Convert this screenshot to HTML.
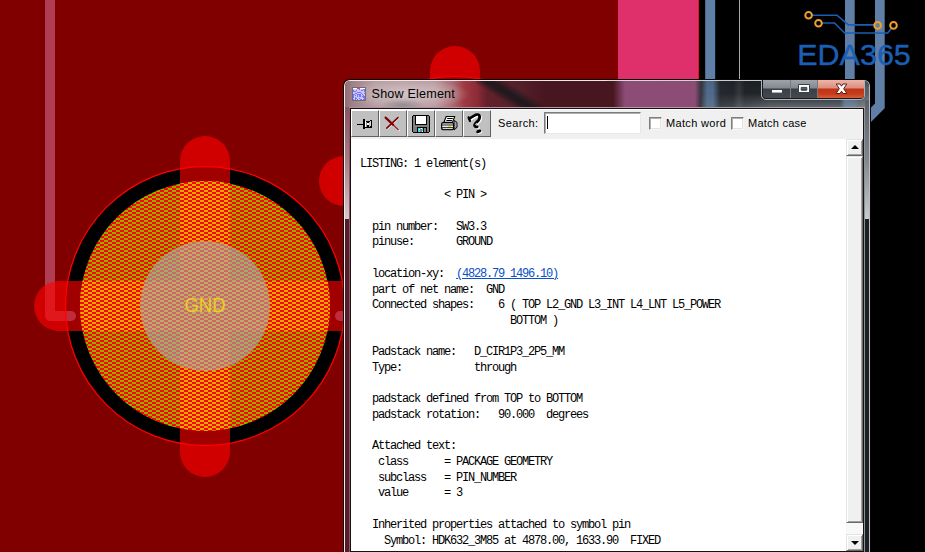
<!DOCTYPE html>
<html lang="en">
<head>
<meta charset="utf-8">
<title>Show Element</title>
<style>
html,body{margin:0;padding:0;}
html,body{width:925px;height:552px;overflow:hidden;}
body{background:#800000;font-family:"Liberation Sans",sans-serif;}
#root{position:relative;width:925px;height:552px;overflow:hidden;background:#800000;}
#pcb{position:absolute;left:0;top:0;width:925px;height:552px;display:block;}

.abs{position:absolute;}
/* outer window frame (Aero glass) */
#win{position:absolute;left:343px;top:79px;width:528px;height:480px;border-radius:7px 7px 0 0;background:#0c0508;overflow:hidden;}
#winhi{position:absolute;left:1px;top:1px;width:526px;height:480px;border-radius:6px 6px 0 0;background:linear-gradient(90deg,#f0e8ea 0,#f0e8ea 263px,#d8dce0 263px,#b8bcc0 100%);overflow:hidden;}
#glass{position:absolute;left:1px;top:1px;width:524px;height:480px;border-radius:5px 5px 0 0;overflow:hidden;
  background:linear-gradient(90deg,#541e28 0,#541e28 262px,#1c2026 262px,#1c2026 524px);}
#tglass{position:absolute;left:0;top:0;width:524px;height:26px;overflow:hidden;
  background:linear-gradient(90deg,#916c73 0,#a08388 8px,#b69ea2 30px,#b89a9f 90px,#ac6a72 108px,#a03a44 119px,#8c2c36 132px,#64202a 142px,#54202a 175px,#48161f 200px,#48161f 268px,#8c4c76 280px,#8c4c76 350px,#34343c 356px,#4f6a8a 362px,#4f6a8a 368px,#262a30 375px,#22262a 388px,#34383e 394px,#202428 400px,#22262c 495px,#4a6484 500px,#4a6484 509px,#4a5058 514px,#5e646c 524px);}
#glow{position:absolute;left:8px;top:-4px;width:120px;height:30px;
  background:radial-gradient(ellipse 62px 15px at 55px 17px,rgba(214,200,203,.9) 0,rgba(210,194,198,.55) 50%,rgba(205,185,190,0) 100%);}
#gstreak{position:absolute;left:36px;top:17px;width:44px;height:9px;background:radial-gradient(ellipse 22px 6px at 22px 7px,rgba(128,132,138,.75) 0,rgba(128,132,138,0) 100%);}
#streak{position:absolute;left:155px;top:-22px;width:19px;height:70px;transform:rotate(-58deg);background:linear-gradient(90deg,rgba(30,24,30,0) 0,rgba(30,24,30,.92) 38%,rgba(30,24,30,.92) 58%,rgba(30,24,30,0) 100%);}
#rg{position:absolute;left:356px;top:0;width:168px;height:26px;-webkit-mask-image:linear-gradient(90deg,rgba(0,0,0,.25) 0,rgba(0,0,0,.4) 20px,#000 70px);mask-image:linear-gradient(90deg,rgba(0,0,0,.25) 0,rgba(0,0,0,.4) 20px,#000 70px);background:linear-gradient(180deg,rgba(0,0,0,.2) 0,rgba(0,0,0,0) 8px,rgba(160,166,172,0) 12px,rgba(160,166,172,.5) 26px);}
#title{position:absolute;left:371.6px;top:86.6px;font:12.6px/14px "Liberation Sans",sans-serif;color:#000;white-space:nowrap;letter-spacing:.18px;}
#ticon{position:absolute;left:352px;top:87px;width:14px;height:14px;box-sizing:border-box;border:1px solid #6e6e72;background:#c4c4ff;overflow:hidden;}
/* client */
#clientborder{position:absolute;left:349px;top:107px;width:516px;height:460px;background:linear-gradient(90deg,#8a5a64 0,#8a5a64 50%,#909498 50%,#909498 100%);}
#cbtop{position:absolute;left:349px;top:107px;width:516px;height:1px;background:linear-gradient(90deg,#b0909a 0,#b898a6 345px,#9ca0a6 356px,#a4a8ae 100%);}
#clientdark{position:absolute;left:350px;top:108px;width:514px;height:460px;background:#1a1014;}
#client{position:absolute;left:351px;top:109px;width:512px;height:442px;background:#fff;overflow:hidden;}
#toolbar{position:absolute;left:0;top:0;width:512px;height:30px;background:linear-gradient(#fff 0,#fff 1px,#f0f0f0 1px,#f0f0f0 100%);}
.tb{position:absolute;top:1px;width:28px;height:27px;background:#c0c0c0;box-sizing:border-box;border-left:1px solid #fff;border-top:1px solid #fff;border-right:1px solid #606060;border-bottom:1px solid #606060;}
.ic{position:absolute;left:-1px;top:-1px;display:block;}
.lbl{position:absolute;font:11px/13px "Liberation Sans",sans-serif;color:#000;white-space:nowrap;}
.cb{position:absolute;top:8px;width:13px;height:13px;box-sizing:border-box;background:#fff;border:1px solid;border-color:#7e7e7e #f6f6f6 #f6f6f6 #7e7e7e;box-shadow:inset 1px 1px 0 #b0b0b0,inset -1px -1px 0 #e4e4e4;}
#search{position:absolute;left:193px;top:3px;width:97px;height:22px;box-sizing:border-box;background:#fff;border:1px solid;border-color:#7a7a7a #e8e8e8 #e8e8e8 #7a7a7a;box-shadow:inset 1px 1px 0 #b0b0b0;}
#caret{position:absolute;left:2px;top:3px;width:1px;height:13px;background:#000;}
#text{position:absolute;left:9px;top:48px;margin:0;font:12px/15.69px "Liberation Mono",monospace;letter-spacing:-1.2px;color:#000;white-space:pre;}
#text a{color:#0a50c8;text-decoration:underline;}
#sb{position:absolute;left:495px;top:30px;width:17px;height:412px;background:#f8f8f8;}

/* caption buttons */
#cap{position:absolute;left:761px;top:80px;width:104px;height:20px;box-sizing:border-box;border:1px solid rgba(225,230,235,.75);border-top:none;border-radius:0 0 5px 5px;overflow:hidden;background:#15181c;}
.cbtn{position:absolute;top:0;height:18px;}
.cbtn.g{background:linear-gradient(#a0a4aa 0,#84888f 8px,#3a3e46 9px,#444851 18px);}
#cmin{left:1px;width:27px;border-radius:0 0 0 3px;}
#cmax{left:29px;width:26px;}
.csep{position:absolute;top:0;width:1px;height:18px;background:rgba(200,205,212,.55);}
#cclose{left:56px;width:46px;border-radius:0 0 3px 0;background:linear-gradient(#ecb6a8 0,#dc8e7c 8px,#bf3318 9px,#c63c1c 14px,#d65c36 18px);}
.cbtn svg{position:absolute;left:0;top:0;display:block;}
/* scrollbar */
.sbtn{position:absolute;left:0;width:17px;height:17px;box-sizing:border-box;background:#f0f0f0;border:1px solid;border-color:#e3e3e3 #696969 #696969 #e3e3e3;box-shadow:inset 1px 1px 0 #fff,inset -1px -1px 0 #a0a0a0;}
#sthumb{position:absolute;left:0;top:17px;width:17px;height:367px;box-sizing:border-box;background:#f0f0f0;border:1px solid;border-color:#e3e3e3 #696969 #696969 #e3e3e3;box-shadow:inset 1px 1px 0 #fff,inset -1px -1px 0 #a0a0a0;}
.arr{position:absolute;left:4px;width:0;height:0;border-left:4px solid transparent;border-right:4px solid transparent;}
/* side frame upper gradient */
#lfx{position:absolute;left:345px;top:107px;width:4px;height:112px;background:linear-gradient(#8a5560 0,#a88088 50%,#d8c8cc 100%);}
#rfx{position:absolute;left:865px;top:100px;width:4px;height:119px;background:linear-gradient(#5a6068 0,#80868c 50%,#c8ccd0 100%);}

</style>
</head>
<body>
<div id="root">
<svg id="pcb" width="925" height="552" viewBox="0 0 925 552">
  <defs>
    <pattern id="chkG" x="0" y="0" width="8" height="4" patternUnits="userSpaceOnUse" shape-rendering="crispEdges">
      <rect x="0" y="0" width="8" height="4" fill="#ff0400"/>
      <rect x="0" y="0" width="4" height="2" fill="#94ae00"/>
      <rect x="4" y="2" width="4" height="2" fill="#94ae00"/>
    </pattern>
    <pattern id="chkY" x="0" y="0" width="8" height="4" patternUnits="userSpaceOnUse" shape-rendering="crispEdges">
      <rect x="0" y="0" width="8" height="4" fill="#ff0400"/>
      <rect x="0" y="0" width="4" height="2" fill="#dcaa00"/>
      <rect x="4" y="2" width="4" height="2" fill="#dcaa00"/>
    </pattern>
    <clipPath id="padClip"><circle cx="205" cy="306" r="125"/></clipPath>
    <clipPath id="ringClip"><circle cx="205" cy="306" r="139.5"/></clipPath>
  </defs>
  <!-- board background -->
  <rect x="0" y="0" width="925" height="552" fill="#800000"/>
  <!-- right side black area -->
  <rect x="699" y="0" width="226" height="552" fill="#000000"/>
  <rect x="618" y="0" width="80" height="90" fill="#df306c"/>
  <rect x="698" y="0" width="1" height="90" fill="#f01020"/>
  <!-- blue-grey traces -->
  <rect x="705.2" y="0" width="10" height="552" fill="#5f7fa6"/>
  <rect x="845" y="0" width="9.7" height="552" fill="#5f7fa6"/>
  <path d="M875 0 H884.7 V108.2 L870 122.9 V108.6 L875 103.6 Z" fill="#5f7fa6"/>
  <rect x="739" y="0" width="1" height="90" fill="#a8a8a8"/>

  <!-- other pads hidden behind dialog -->
  <path d="M430 71 A25 25 0 0 1 480 71 V120 H430 Z" fill="#d00000"/>
  <path d="M430 78.8 A138.5 138.5 0 0 1 480 78.8 V120 H430 Z" fill="#a00000"/><path d="M428 79.2 A138.5 138.5 0 0 1 482 79.2" fill="none" stroke="#ff0000" stroke-width="1"/>
  <circle cx="344" cy="181" r="25" fill="#d00000"/>

  <!-- pink trace (under spokes) -->
  <path d="M50 -10 V316 H71" fill="none" stroke="#af3e52" stroke-width="10" stroke-linecap="round" stroke-linejoin="round"/>
  <!-- black ring -->
  <circle cx="205" cy="306" r="139.5" fill="#000000"/>
  <!-- thermal spokes -->
  <g fill="#ff0000" fill-opacity="0.63">
    <path d="M180 161 A25 25 0 0 1 230 161 V452 A25 25 0 0 1 180 452 Z"/>
    <path d="M59 281 H180 V331 H59 A25 25 0 0 1 59 281 Z"/>
    <path d="M230 281 H351 A25 25 0 0 1 351 331 H230 Z"/>
  </g>
  <g clip-path="url(#ringClip)">
    <path d="M50 316 H71" fill="none" stroke="#c02c3c" stroke-width="10" stroke-linecap="round"/>
    <path d="M340 316 H400" fill="none" stroke="#c02c3c" stroke-width="10" stroke-linecap="round"/>
  </g>
  <circle cx="205" cy="306" r="139.5" fill="none" stroke="#ff0000" stroke-width="1.25"/>
  <!-- pad fill -->
  <g clip-path="url(#padClip)" shape-rendering="crispEdges">
    <rect x="70" y="170" width="270" height="272" fill="url(#chkG)"/>
    <rect x="180" y="170" width="50" height="272" fill="url(#chkY)"/>
    <rect x="70" y="281" width="270" height="50" fill="url(#chkY)"/>
  </g>
  <!-- drill -->
  <circle cx="205" cy="306" r="65" fill="#acaaae" fill-opacity="0.6"/>
  <text x="205" y="312.3" text-anchor="middle" font-family="Liberation Sans, sans-serif" font-size="19.5" fill="#e8d020" textLength="41" lengthAdjust="spacingAndGlyphs">GND</text>

  <!-- EDA365 logo -->
  <g fill="none" stroke="#1b5fb4" stroke-width="1.6">
    <path d="M812 15.2 H837 L848.4 24.9 H874"/>
    <path d="M822 23 H834.5 L844.6 33 H887.7 L891.5 28.3"/>
  </g>
  <g fill="none" stroke="#f0a028" stroke-width="2">
    <circle cx="808.6" cy="15.2" r="3.3"/>
    <circle cx="818.5" cy="23.3" r="3.3"/>
    <circle cx="877.6" cy="25.4" r="3.3"/>
    <circle cx="893.5" cy="25.4" r="3.3"/>
  </g>
  <text x="797.3" y="64.7" font-family="Liberation Sans, sans-serif" font-size="29.5" fill="#1b5fb4" stroke="#1b5fb4" stroke-width="0.4" textLength="113.5" lengthAdjust="spacingAndGlyphs">EDA365</text>
</svg>

<div id="win"><div id="winhi"><div id="glass"><div id="tglass"><div id="glow"></div><div id="gstreak"></div><div id="streak"></div><div id="rg"></div></div></div></div></div>
<div id="ticon"><svg width="12" height="12" viewBox="0 0 12 12" style="display:block" shape-rendering="crispEdges"><rect width="12" height="12" fill="#c8c8ff"/><rect width="12" height="1" fill="#fff"/><g fill="#7474ff"><rect x="6" y="1" width="1" height="1"/><rect x="10" y="1" width="1" height="1"/><rect x="11" y="1" width="1" height="1"/><rect x="0" y="2" width="1" height="1"/><rect x="3" y="2" width="1" height="1"/><rect x="8" y="2" width="1" height="1"/><rect x="9" y="2" width="1" height="1"/><rect x="11" y="2" width="1" height="1"/><rect x="0" y="3" width="1" height="1"/><rect x="1" y="3" width="1" height="1"/><rect x="2" y="3" width="1" height="1"/><rect x="11" y="3" width="1" height="1"/><rect x="4" y="4" width="1" height="1"/><rect x="5" y="4" width="1" height="1"/><rect x="6" y="4" width="1" height="1"/><rect x="7" y="4" width="1" height="1"/><rect x="2" y="5" width="1" height="1"/><rect x="3" y="5" width="1" height="1"/><rect x="8" y="5" width="1" height="1"/><rect x="11" y="5" width="1" height="1"/><rect x="0" y="6" width="1" height="1"/><rect x="1" y="6" width="1" height="1"/><rect x="4" y="6" width="1" height="1"/><rect x="5" y="6" width="1" height="1"/><rect x="6" y="6" width="1" height="1"/><rect x="7" y="6" width="1" height="1"/><rect x="9" y="6" width="1" height="1"/><rect x="0" y="7" width="1" height="1"/><rect x="2" y="7" width="1" height="1"/><rect x="4" y="7" width="1" height="1"/><rect x="6" y="7" width="1" height="1"/><rect x="7" y="7" width="1" height="1"/><rect x="10" y="7" width="1" height="1"/><rect x="0" y="8" width="1" height="1"/><rect x="4" y="8" width="1" height="1"/><rect x="6" y="8" width="1" height="1"/><rect x="7" y="8" width="1" height="1"/><rect x="9" y="8" width="1" height="1"/><rect x="10" y="8" width="1" height="1"/><rect x="11" y="8" width="1" height="1"/><rect x="0" y="9" width="1" height="1"/><rect x="2" y="9" width="1" height="1"/><rect x="10" y="9" width="1" height="1"/><rect x="11" y="9" width="1" height="1"/><rect x="2" y="10" width="1" height="1"/><rect x="3" y="10" width="1" height="1"/><rect x="6" y="10" width="1" height="1"/><rect x="11" y="10" width="1" height="1"/><rect x="0" y="11" width="1" height="1"/><rect x="2" y="11" width="1" height="1"/><rect x="4" y="11" width="1" height="1"/><rect x="7" y="11" width="1" height="1"/><rect x="8" y="11" width="1" height="1"/><rect x="10" y="11" width="1" height="1"/><rect x="11" y="11" width="1" height="1"/></g><rect x="4" y="0" width="3" height="1" fill="#ff4040"/></svg></div>
<div id="title">Show Element</div>
<div id="clientborder"></div><div id="cbtop"></div><div id="clientdark"></div>
<div id="client">
  <div id="toolbar">
    <div class="tb" style="left:0"><svg class="ic" width="28" height="27" viewBox="351 110 28 27"><g shape-rendering="crispEdges"><rect x="357" y="124" width="6" height="1" fill="#000"/><rect x="363" y="119" width="2" height="10" fill="#000"/><rect x="365" y="121" width="5" height="7" fill="#000"/><rect x="370" y="120" width="2" height="8" fill="#000"/><rect x="365" y="121" width="1" height="6" fill="#fff"/><rect x="366" y="122" width="1" height="5" fill="#909090"/><rect x="367" y="123" width="2" height="2" fill="#fff"/><rect x="369" y="122" width="1" height="5" fill="#b8b8b8"/><rect x="370" y="121" width="1" height="5" fill="#e0e0e0"/></g></svg></div>
    <div class="tb" style="left:28px"><svg class="ic" width="28" height="27" viewBox="379 110 28 27"><g fill="none" stroke-linecap="round"><path d="M398.8 118 L387.5 128.8 M386.5 118.2 L399.3 130.6" stroke="#f4f4f4" stroke-width="1.2"/><path d="M385.6 117.6 L393 124.6" stroke="#800000" stroke-width="2.2"/><path d="M393 124.6 L398.2 129.6" stroke="#800000" stroke-width="1.1"/><path d="M398 117.6 L386.8 128.2" stroke="#800000" stroke-width="1.6"/></g></svg></div>
    <div class="tb" style="left:56px"><svg class="ic" width="28" height="27" viewBox="407 110 28 27"><g shape-rendering="crispEdges"><path d="M413 115 H429 V116 H430 V132 H429 V133 H413 V132 H412 V116 H413 Z" fill="#000"/><rect x="413" y="116" width="16" height="16" fill="#808080"/><rect x="415" y="115" width="12" height="10" fill="#000"/><rect x="416" y="116" width="10" height="8" fill="#fff"/><rect x="417" y="127" width="10" height="6" fill="#000"/><rect x="418" y="128" width="5" height="4" fill="#30e0e8"/><rect x="419" y="129" width="1" height="1" fill="#fff"/><rect x="421" y="128" width="1" height="1" fill="#fff"/><rect x="420" y="129" width="2" height="3" fill="#808080"/><rect x="422" y="131" width="1" height="1" fill="#fff"/><rect x="424" y="128" width="2" height="4" fill="#808080"/></g></svg></div>
    <div class="tb" style="left:84px"><svg class="ic" width="28" height="27" viewBox="435 110 28 27"><g stroke-linejoin="round"><path d="M454.2 120.4 L457 122.4 V127.4 L454 130 Z" fill="#8c8c8c" stroke="#000" stroke-width="0.9"/><path d="M455 122 V128 M456 123.2 V126.6" stroke="#e0e0e0" stroke-width="0.6" stroke-dasharray="1 1"/><path d="M446.2 116.5 H454.8 L452.5 122.3 H443.9 Z" fill="#fff" stroke="#000" stroke-width="1.1"/><path d="M447.2 118.5 H452.8 M446.4 120.5 H452" stroke="#000" stroke-width="1"/><rect x="441.6" y="122.6" width="12" height="7" rx="1.3" fill="#c0c0c0" stroke="#000" stroke-width="1.1"/><rect x="442" y="124.7" width="11.2" height="0.9" fill="#000"/><rect x="442.4" y="125.6" width="10.6" height="1.7" fill="#ececec"/><rect x="448" y="126" width="3" height="1" fill="#f0e000"/><rect x="442" y="127.3" width="11.2" height="0.9" fill="#000"/><rect x="443" y="128.2" width="9.4" height="0.9" fill="#e4e4e4"/></g></svg></div>
    <div class="tb" style="left:112px"><svg class="ic" width="28" height="27" viewBox="463 110 28 27"><g fill="none" stroke-linecap="round" stroke-linejoin="round"><path d="M469.4 118.6 L475.6 114.9 Q479.2 114 479.7 116.6 Q479.9 119.4 477 121.8 Q474.2 124.4 474.6 125.8 Q475.2 127.2 477.4 126.8" stroke="#fff" stroke-width="2.4" transform="translate(1.2,1)"/><path d="M469.2 118.6 L475.6 114.9 Q479.2 114 479.7 116.6 Q479.9 119.4 477 121.8 Q474.2 124.4 474.6 125.8 Q475.2 127.2 477.2 126.8" stroke="#000" stroke-width="2.8"/><path d="M468.6 117.4 L470 121" stroke="#000" stroke-width="2.2"/><path d="M472.6 119 L477.6 116.2" stroke="#fff" stroke-width="1"/><path d="M476.4 123.4 L475.8 124.6" stroke="#fff" stroke-width="0.9"/></g><ellipse cx="479.8" cy="132.1" rx="2.7" ry="1.6" fill="#fff" transform="rotate(-20 479.8 132.1)"/><ellipse cx="478.8" cy="131.3" rx="2.7" ry="1.6" fill="#000" transform="rotate(-20 478.8 131.3)"/></svg></div>
    <div class="lbl" style="left:147px;top:8px;letter-spacing:.36px">Search:</div>
    <div id="search"><div id="caret"></div></div>
    <div class="cb" style="left:298px"></div><div class="lbl" style="left:315px;top:8px;letter-spacing:.34px">Match word</div>
    <div class="cb" style="left:380px"></div><div class="lbl" style="left:397px;top:8px;letter-spacing:.24px">Match case</div>
  </div>
<pre id="text">LISTING: 1 element(s)

              &lt; PIN &gt;

  pin number:   SW3.3
  pinuse:       GROUND

  location-xy:  <a>(4828.79 1496.10)</a>
  part of net name:  GND
  Connected shapes:    6 ( TOP L2_GND L3_INT L4_LNT L5_POWER
                         BOTTOM )

  Padstack name:   D_CIR1P3_2P5_MM
  Type:            through

  padstack defined from TOP to BOTTOM
  padstack rotation:   90.000  degrees

  Attached text:
   class      = PACKAGE GEOMETRY
   subclass   = PIN_NUMBER
   value      = 3

  Inherited properties attached to symbol pin
    Symbol: HDK632_3M85 at 4878.00, 1633.90  FIXED
</pre>
  <div id="sb"><div class="sbtn" style="top:0"><div class="arr" style="top:5px;border-bottom:4px solid #000"></div></div><div id="sthumb"></div><div class="sbtn" style="top:395px"><div class="arr" style="top:6px;border-top:4px solid #000"></div></div></div>
</div>

<div id="lfx"></div><div id="rfx"></div>
<div id="cap">
  <div class="cbtn g" id="cmin"><svg width="27" height="18" viewBox="762 80 27 18"><rect x="770.5" y="89.5" width="11" height="3.6" fill="#fff" stroke="#3c4048" stroke-width="1"/></svg></div>
  <div class="cbtn g" id="cmax"><svg width="26" height="18" viewBox="790 80 26 18"><path d="M797.5 84.5 H808.5 V92.5 H797.5 Z M800.2 87.4 V90.2 H805.8 V87.4 Z" fill="#fff" fill-rule="evenodd" stroke="#3c4048" stroke-width="1"/></svg></div>
  <div class="csep" style="left:28px"></div><div class="csep" style="left:55px"></div><div class="cbtn" id="cclose"><svg width="46" height="18" viewBox="817 80 46 18"><path d="M835.2 84 H839.1 L840.5 86.2 L841.9 84 H845.8 L842.7 88.7 L845.9 93.5 H842 L840.5 91.2 L839 93.5 H835.1 L838.3 88.7 Z" fill="#fff" stroke="#5a2018" stroke-width="1" stroke-linejoin="round"/></svg></div>
</div>
</div>
</body>
</html>
